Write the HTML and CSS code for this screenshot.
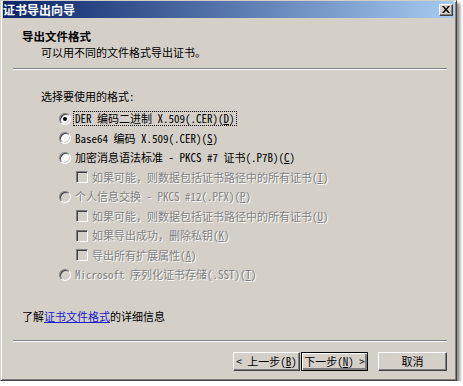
FILE: index.html
```html
<!DOCTYPE html>
<html lang="zh-CN">
<head>
<meta charset="UTF-8">
<title>证书导出向导</title>
<link rel="stylesheet" href="styles.css">
</head>
<body>
<div class="window">
    <div class="titlebar">
        <span class="title">证书导出向导</span>
        <span class="close">
            <svg width="8" height="7" viewBox="0 0 8 7"><path d="M0 0h2l2 2.5L6 0h2L5 3.5 8 7H6L4 4.5 2 7H0l3-3.5z" fill="#000"/></svg>
        </span>
    </div>

    <div class="header">
        <div class="head-title">导出文件格式</div>
        <div class="head-sub">可以用不同的文件格式导出证书。</div>
    </div>
    <div class="sep"></div>

    <div class="content">
        <div class="prompt">选择要使用的格式:</div>
        <div class="opt">
            <span class="radio checked"></span>
            <span class="label focus">DER 编码二进制 X.509(.CER)(<u>D</u>)</span>
        </div>
        <div class="opt">
            <span class="radio"></span>
            <span class="label">Base64 编码 X.509(.CER)(<u>S</u>)</span>
        </div>
        <div class="opt">
            <span class="radio"></span>
            <span class="label">加密消息语法标准 - PKCS #7 证书(.P7B)(<u>C</u>)</span>
        </div>
        <div class="opt sub disabled">
            <span class="check"></span>
            <span class="label">如果可能，则数据包括证书路径中的所有证书(<u>I</u>)</span>
        </div>
        <div class="opt disabled">
            <span class="radio"></span>
            <span class="label">个人信息交换 - PKCS #12(.PFX)(<u>P</u>)</span>
        </div>
        <div class="opt sub disabled">
            <span class="check"></span>
            <span class="label">如果可能，则数据包括证书路径中的所有证书(<u>U</u>)</span>
        </div>
        <div class="opt sub disabled">
            <span class="check"></span>
            <span class="label">如果导出成功，删除私钥(<u>K</u>)</span>
        </div>
        <div class="opt sub disabled">
            <span class="check"></span>
            <span class="label">导出所有扩展属性(<u>A</u>)</span>
        </div>
        <div class="opt disabled">
            <span class="radio"></span>
            <span class="label">Microsoft 序列化证书存储(.SST)(<u>T</u>)</span>
        </div>
    </div>

    <div class="more">了解<a href="#">证书文件格式</a>的详细信息</div>
    <div class="sep sep-foot"></div>

    <div class="buttons">
        <button class="btn">&lt; 上一步(<u>B</u>)</button>
        <button class="btn default">下一步(<u>N</u>) &gt;</button>
        <button class="btn cancel">取消</button>
    </div>
</div>
</body>
</html>
```

FILE: styles.css
```css
body {
    margin: 0;
    padding: 0;
    background-color: #fff;
    font-family: "Noto Sans Mono CJK SC", "Noto Sans CJK SC", sans-serif;
    font-size: 11px;
    color: #000;
}
.window {
    width: 457px;
    height: 381px;
    box-sizing: border-box;
    padding: 0 2px;
    background-color: #d4d0c8;
    border: 1px solid;
    border-color: #d4d0c8 #404040 #404040 #d4d0c8;
    box-shadow: inset 1px 1px #fff, inset -1px -1px #808080, 3px 3px 3px rgba(0, 0, 0, 0.45);
}
.titlebar {
    height: 17px;
    display: flex;
    align-items: center;
    justify-content: space-between;
    padding: 0 1px 0 0;
    background: linear-gradient(to right, #0a246a, #a6caf0);
}
.title {
    color: #fff;
    font-family: "Noto Sans CJK SC", sans-serif;
    font-weight: bold;
    font-size: 12px;
    line-height: 17px;
}
.close {
    width: 14px;
    height: 12px;
    box-sizing: border-box;
    display: flex;
    align-items: center;
    justify-content: center;
    background-color: #d4d0c8;
    border: 1px solid;
    border-color: #fff #404040 #404040 #fff;
    box-shadow: inset -1px -1px #808080;
}
.header {
    padding: 10px 0 0 19px;
    line-height: 16px;
}
.head-title {
    font-family: "Noto Sans CJK SC", sans-serif;
    font-weight: bold;
    font-size: 11.5px;
}
.head-sub {
    padding-left: 19px;
}
.sep {
    margin: 8px 7px 0 10px;
    border-top: 1px solid #808080;
    border-bottom: 1px solid #fff;
}
.content {
    padding-left: 38px;
}
.prompt {
    margin-top: 18px;
    margin-bottom: 5px;
    line-height: 16px;
}
.opt {
    height: 19.5px;
    display: flex;
    align-items: center;
    padding-left: 18px;
}
.opt.sub {
    padding-left: 35px;
}
.label {
    margin-left: 3px;
    padding: 0 1px;
    line-height: 13px;
    white-space: nowrap;
}
.focus {
    outline: 1px dotted #000;
}
.disabled .label {
    color: #808080;
    text-shadow: 1px 1px 0 #fff;
}
.radio {
    position: relative;
    width: 12px;
    height: 12px;
    box-sizing: border-box;
    border-radius: 50%;
    border: 1px solid;
    border-color: #808080 #fff #fff #808080;
    box-shadow: inset 1px 1px #404040, inset -1px -1px #d4d0c8;
    background-color: #fff;
    flex: none;
}
.radio.checked::after {
    content: "";
    position: absolute;
    left: 3px;
    top: 3px;
    width: 4px;
    height: 4px;
    border-radius: 50%;
    background-color: #000;
}
.check {
    width: 12px;
    height: 12px;
    box-sizing: border-box;
    border: 1px solid;
    border-color: #808080 #fff #fff #808080;
    box-shadow: inset 1px 1px #404040, inset -1px -1px #d4d0c8;
    background-color: #fff;
    flex: none;
}
.disabled .radio,
.disabled .check {
    background-color: #d4d0c8;
}
.more {
    margin-top: 23px;
    padding-left: 19px;
    line-height: 16px;
    font-family: "Noto Sans CJK SC", sans-serif;
}
.more a {
    color: #1a1acc;
}
.sep-foot {
    margin-top: 16px;
}
.buttons {
    display: flex;
    justify-content: flex-end;
    margin-top: 10px;
    padding-right: 7px;
}
.btn {
    width: 67px;
    height: 19px;
    margin: 0 0 0 1px;
    padding: 0;
    box-sizing: border-box;
    font-family: "Noto Sans Mono CJK SC", "Noto Sans CJK SC", sans-serif;
    font-size: 11px;
    color: #000;
    background-color: #d4d0c8;
    border: 1px solid;
    border-color: #fff #404040 #404040 #fff;
    box-shadow: inset -1px -1px #808080;
    white-space: nowrap;
}
.btn.default {
    border: 1px solid #000;
    box-shadow: inset 1px 1px #fff, inset -2px -2px #808080, inset -1px -1px #404040;
}
.btn.cancel {
    width: 69px;
    margin-left: 10px;
}
```
